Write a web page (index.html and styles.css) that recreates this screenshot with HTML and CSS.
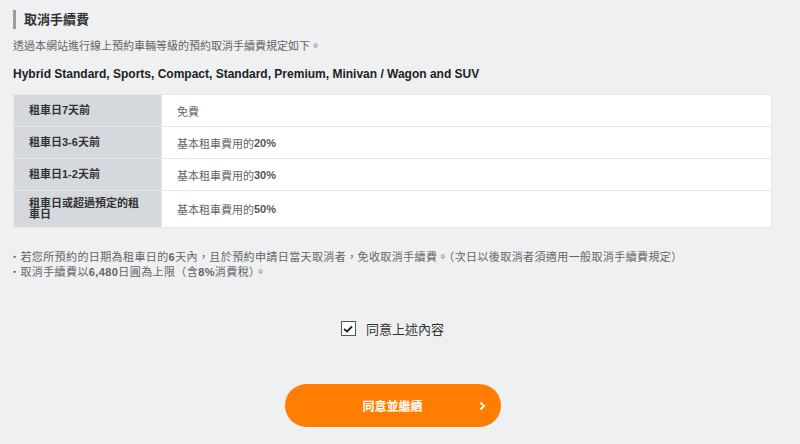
FILE: index.html
```html
<!DOCTYPE html>
<html lang="zh-Hant">
<head>
  <meta charset="UTF-8" />
  <meta name="viewport" content="width=device-width, initial-scale=1.0"/>
  <title>取消手續費</title>
  <link rel="stylesheet" href="styles.css">
</head>
<body>
  <section class="cancel">
    <h2 class="cancel-title">取消手續費</h2>
    <p class="cancel-lead">透過本網站進行線上預約車輛等級的預約取消手續費規定如下。</p>
    <p class="cancel-class">Hybrid Standard, Sports, Compact, Standard, Premium, Minivan / Wagon and SUV</p>

    <div class="fee-table">
      <div class="fee-row">
        <div class="fee-when">租車日7天前</div>
        <div class="fee-cost">免費</div>
      </div>
      <div class="fee-row">
        <div class="fee-when">租車日3-6天前</div>
        <div class="fee-cost">基本租車費用的<b>20%</b></div>
      </div>
      <div class="fee-row">
        <div class="fee-when">租車日1-2天前</div>
        <div class="fee-cost">基本租車費用的<b>30%</b></div>
      </div>
      <div class="fee-row tall">
        <div class="fee-when">租車日或超過預定的租車日</div>
        <div class="fee-cost">基本租車費用的<b>50%</b></div>
      </div>
    </div>

    <ul class="notes">
      <li>若您所預約的日期為租車日的<b>6</b>天內，且於預約申請日當天取消者，免收取消手續費。（次日以後取消者須適用一般取消手續費規定）</li>
      <li>取消手續費以<b>6,480</b>日圓為上限（含<b>8%</b>消費稅）。</li>
    </ul>

    <label class="agree">
      <span class="box">
        <svg width="10" height="8" viewBox="0 0 10 8"><path d="M1 4 L4 6.5 L9 1.5" fill="none" stroke="#222" stroke-width="1.8"/></svg>
      </span>
      同意上述內容
    </label>

    <div class="actions">
      <button class="next" type="button">
        同意並繼續
        <svg class="chev" width="7" height="10" viewBox="0 0 7 10"><path d="M1.5 1.5 L5 5 L1.5 8.5" fill="none" stroke="#fff" stroke-width="1.8"/></svg>
      </button>
    </div>
  </section>
</body>
</html>
```

FILE: styles.css
```css
body {
  margin: 0;
  background: #eef0f2;
  color: #333;
  font-family: "Liberation Sans", Arial, "Noto Sans CJK TC", sans-serif;
}
.cancel {
  padding: 10px 28px 0 13px;
}
.cancel-title {
  margin: 0;
  border-left: 3px solid #9a9ea3;
  padding-left: 8px;
  font-size: 13px;
  font-weight: bold;
  line-height: 19px;
  color: #333;
}
.cancel-lead {
  margin: 9px 0 0;
  font-size: 11px;
  line-height: 16px;
  color: #666;
}
.cancel-class {
  margin: 12px 0 0;
  font-size: 12px;
  font-weight: bold;
  line-height: 16px;
  color: #222;
}
.fee-table {
  margin-top: 12px;
  display: flex;
  flex-direction: column;
  gap: 1px;
  background: #e6e8eb;
  border: 1px solid #e6e8eb;
}
.fee-row {
  display: grid;
  grid-template-columns: 147px 1fr;
  column-gap: 1px;
  height: 31px;
}
.fee-row.tall {
  height: 36px;
}
.fee-when {
  background: #d5d9de;
  padding: 0 15px;
  display: flex;
  align-items: center;
  font-size: 11px;
  font-weight: bold;
  line-height: 11px;
  color: #333;
}
.fee-cost {
  background: #fff;
  padding: 0 15px;
  display: flex;
  align-items: center;
  font-size: 11px;
  color: #666;
}
.fee-cost b {
  color: #555;
}
.notes {
  list-style: none;
  margin: 22px 0 0;
  padding: 0;
  font-size: 11px;
  line-height: 15px;
  letter-spacing: 0.4px;
  color: #666;
}
.notes li::before {
  content: "・";
  margin-left: -4px;
}
.agree {
  margin: 39px auto 0;
  width: fit-content;
  display: flex;
  align-items: center;
  gap: 10px;
  font-size: 13px;
  color: #333;
}
.box {
  width: 13px;
  height: 13px;
  border: 1px solid #555;
  background: #fff;
  display: flex;
  align-items: center;
  justify-content: center;
}
.actions {
  margin-top: 46px;
  display: flex;
  justify-content: center;
}
.next {
  position: relative;
  width: 216px;
  height: 43px;
  border: none;
  border-radius: 22px;
  background: #ff7d00;
  color: #fff;
  font-family: inherit;
  font-size: 12px;
  font-weight: bold;
  cursor: pointer;
}
.chev {
  position: absolute;
  right: 15px;
  top: 17px;
}
```
